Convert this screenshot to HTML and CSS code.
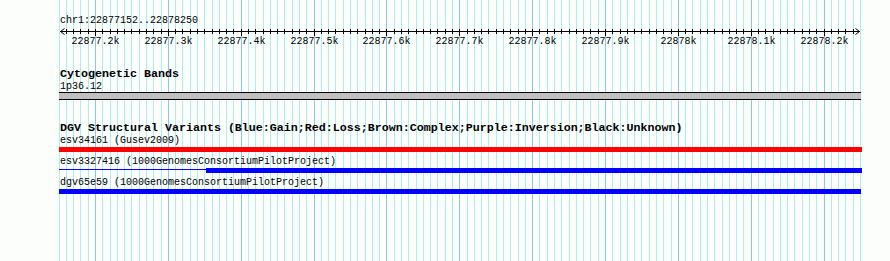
FILE: index.html
```html
<!DOCTYPE html>
<html lang="en">
<head>
  <meta charset="UTF-8">
  <meta name="viewport" content="width=device-width, initial-scale=1.0">
  <title>chr1:22877152..22878250</title>
  <link rel="stylesheet" href="styles.css">
</head>
<body>
  <div class="browser">
    <svg class="grid" id="grid" width="890" height="261"></svg>
    <div class="ruler">
      <div class="ruler-title">chr1:22877152..22878250</div>
      <svg class="scale" id="scale" width="890" height="22"></svg>
    </div>
    <div class="track track-cyto">
      <div class="track-title">Cytogenetic Bands</div>
      <div class="feature-label">1p36.12</div>
      <div class="band"></div>
    </div>
    <div class="track track-dgv">
      <div class="track-title">DGV Structural Variants (Blue:Gain;Red:Loss;Brown:Complex;Purple:Inversion;Black:Unknown)</div>
      <div class="feature">
        <div class="feature-label">esv34161 (Gusev2009)</div>
        <div class="bar loss"></div>
      </div>
      <div class="feature">
        <div class="feature-label">esv3327416 (1000GenomesConsortiumPilotProject)</div>
        <div class="bar split">
          <div class="bar-thin"></div>
          <div class="bar-thick"></div>
        </div>
      </div>
      <div class="feature">
        <div class="feature-label">dgv65e59 (1000GenomesConsortiumPilotProject)</div>
        <div class="bar gain"></div>
      </div>
    </div>
  </div>
  <script src="script.js"></script>
</body>
</html>
```

FILE: styles.css
```css
* { box-sizing: border-box; }
body {
  margin: 0;
  background: #fcfefc;
  color: #000;
  font-family: "Liberation Mono", "DejaVu Sans Mono", monospace;
  font-size: 10px;
}
.browser {
  position: relative;
  width: 890px;
  height: 261px;
  overflow: hidden;
}
.grid {
  position: absolute;
  top: 0;
  left: 0;
}
.grid .minor { stroke: #aeeeee; }
.grid .major { stroke: #86c8e8; }
.ruler, .track {
  position: relative;
  padding-left: 60px;
}
.ruler { padding-top: 15px; }
.ruler-title { line-height: 12px; }
.scale {
  display: block;
  margin-left: -60px;
}
.scale line, .scale polyline {
  stroke: #000;
  fill: none;
}
.scale text {
  font-family: "Liberation Mono", "DejaVu Sans Mono", monospace;
  font-size: 10px;
  fill: #000;
}
.track-title {
  font-size: 11.67px;
  font-weight: bold;
  line-height: 13px;
  white-space: nowrap;
}
.feature-label {
  line-height: 12px;
  white-space: nowrap;
}
.track-cyto { margin-top: 19px; }
.track-cyto .feature-label { line-height: 11px; }
.band {
  margin-left: -1px;
  width: 802px;
  height: 8px;
  background: #c0c0c0;
  border-top: 1px solid #000;
  border-bottom: 1px solid #000;
}
.track-dgv { margin-top: 22px; }
.feature + .feature { margin-top: 4px; }
.bar {
  margin-left: -1px;
  width: 803px;
  height: 5px;
}
.bar.loss { background: #ff0000; }
.bar.gain { background: #0000ff; width: 802px; }
.bar.split {
  display: flex;
  align-items: flex-start;
}
.bar-thin {
  flex: 0 0 147px;
  height: 1px;
  margin-top: 1px;
  background: #0000ff;
}
.bar-thick {
  flex: 1;
  height: 5px;
  background: #0000ff;
}
```

FILE: script.js
```js
const start = 22877152;
const end = 22878250;
const NS = 'http://www.w3.org/2000/svg';
const px = pos => Math.round(60 + (pos - start) * 800 / (end - start)) + 0.5;

function add(svg, tag, attrs) {
  const el = document.createElementNS(NS, tag);
  for (const k in attrs) el.setAttribute(k, attrs[k]);
  svg.appendChild(el);
  return el;
}

// grid lines behind every track
const grid = document.getElementById('grid');
add(grid, 'line', { x1: 59.5, y1: 0, x2: 59.5, y2: 261, class: 'minor' });
for (let p = Math.ceil(start / 10) * 10; p <= end; p += 10) {
  const x = px(p);
  add(grid, 'line', { x1: x, y1: 0, x2: x, y2: 261, class: p % 100 === 0 ? 'major' : 'minor' });
}

// ruler: axis, arrows, ticks, labels
const scale = document.getElementById('scale');
add(scale, 'line', { x1: 60, y1: 4.5, x2: 860, y2: 4.5 });
add(scale, 'polyline', { points: '64.5,1.5 60.5,4.5 64.5,7.5' });
add(scale, 'polyline', { points: '855.5,1.5 859.5,4.5 855.5,7.5' });
for (let p = Math.ceil(start / 10) * 10; p < end; p += 10) {
  const x = px(p);
  const major = p % 100 === 0;
  add(scale, 'line', { x1: x, y1: 2, x2: x, y2: major ? 9 : 7 });
  if (major) {
    const t = add(scale, 'text', { x: x, y: 17, 'text-anchor': 'middle' });
    t.textContent = (p / 1000) + 'k';
  }
}
```
